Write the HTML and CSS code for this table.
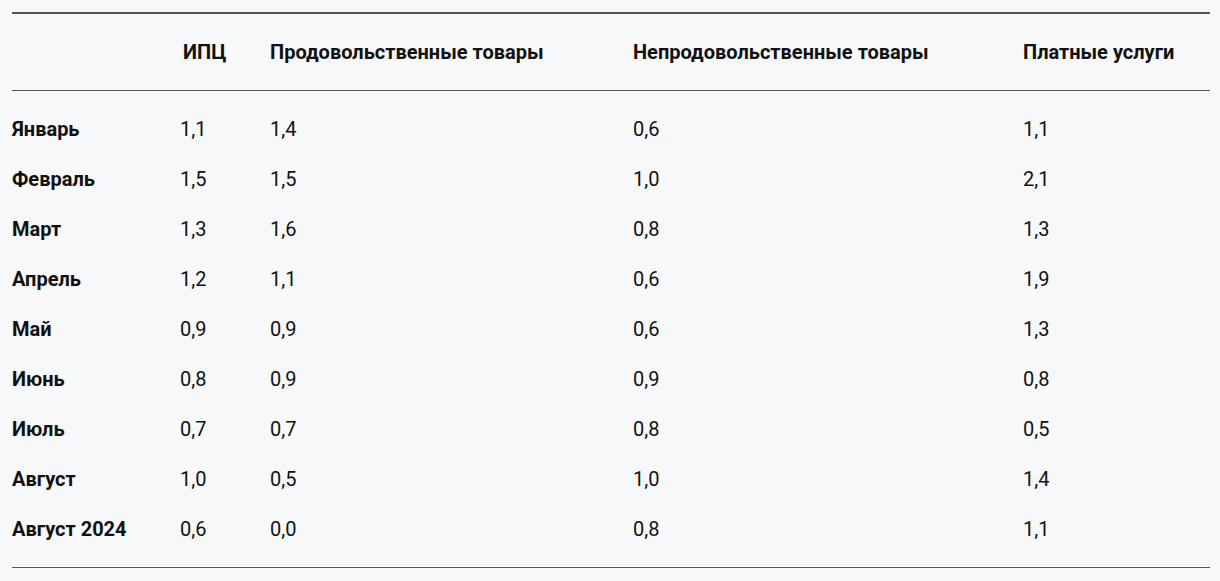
FILE: index.html
```html
<!DOCTYPE html>
<html lang="ru">
<head>
<meta charset="utf-8">
<link rel="stylesheet" href="styles.css">
</head>
<body>
<div class="wrap">
<table class="cpi">
<colgroup>
<col class="c1"><col class="c2"><col class="c3"><col class="c4"><col class="c5">
</colgroup>
<thead>
<tr><th></th><th>ИПЦ</th><th>Продовольственные товары</th><th>Непродовольственные товары</th><th>Платные услуги</th></tr>
</thead>
<tbody>
<tr class="first"><th>Январь</th><td>1,1</td><td>1,4</td><td>0,6</td><td>1,1</td></tr>
<tr><th>Февраль</th><td>1,5</td><td>1,5</td><td>1,0</td><td>2,1</td></tr>
<tr><th>Март</th><td>1,3</td><td>1,6</td><td>0,8</td><td>1,3</td></tr>
<tr><th>Апрель</th><td>1,2</td><td>1,1</td><td>0,6</td><td>1,9</td></tr>
<tr><th>Май</th><td>0,9</td><td>0,9</td><td>0,6</td><td>1,3</td></tr>
<tr><th>Июнь</th><td>0,8</td><td>0,9</td><td>0,9</td><td>0,8</td></tr>
<tr><th>Июль</th><td>0,7</td><td>0,7</td><td>0,8</td><td>0,5</td></tr>
<tr><th>Август</th><td>1,0</td><td>0,5</td><td>1,0</td><td>1,4</td></tr>
<tr class="last"><th>Август 2024</th><td>0,6</td><td>0,0</td><td>0,8</td><td>1,1</td></tr>
</tbody>
</table>
</div>
</body>
</html>
```
FILE: styles.css
```css
html, body {
  margin: 0;
  padding: 0;
  background: #f7f8fa;
}
.wrap {
  padding: 12px 10px 0 12px;
}
.cpi {
  width: 1198px;
  border-collapse: collapse;
  table-layout: fixed;
  font-family: Roboto, "Liberation Sans", sans-serif;
  font-size: 20px;
  color: #111;
  border-top: 2px solid #555;
  border-bottom: 1px solid #555;
}
.c1 { width: 168px; }
.c2 { width: 90px; }
.c3 { width: 363px; }
.c4 { width: 390px; }
.c5 { width: 187px; }
.cpi th, .cpi td {
  box-sizing: border-box;
  padding: 0;
  text-align: left;
  vertical-align: middle;
}
.cpi thead th {
  height: 77px;
  font-weight: 700;
  border-bottom: 1px solid #555;
}
.cpi thead th:nth-child(2) { padding-left: 3px; }
.cpi tbody th {
  font-weight: 700;
}
.cpi tbody td {
  font-weight: 400;
}
.cpi tbody tr > * {
  height: 50px;
}
.cpi tbody tr.first > * {
  height: 64px;
  padding-top: 14px;
}
.cpi tbody tr.last > * {
  height: 63px;
  padding-bottom: 13px;
}
```
